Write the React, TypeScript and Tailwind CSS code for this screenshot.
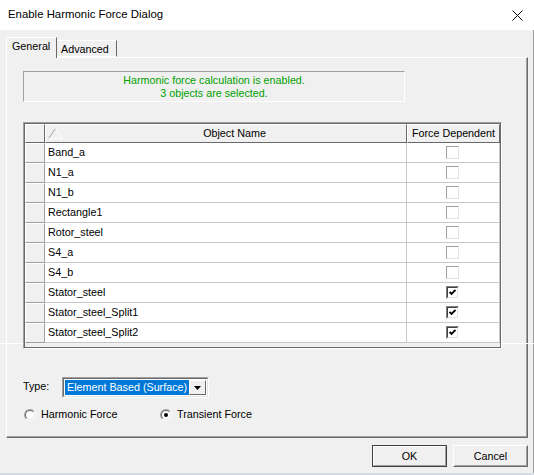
import React from 'react';

const rows = [
  { name: 'Band_a', checked: false },
  { name: 'N1_a', checked: false },
  { name: 'N1_b', checked: false },
  { name: 'Rectangle1', checked: false },
  { name: 'Rotor_steel', checked: false },
  { name: 'S4_a', checked: false },
  { name: 'S4_b', checked: false },
  { name: 'Stator_steel', checked: true },
  { name: 'Stator_steel_Split1', checked: true },
  { name: 'Stator_steel_Split2', checked: true },
];

const CheckBox: React.FC<{ checked: boolean }> = ({ checked }) => {
  if (!checked) {
    return (
      <div className="w-[13px] h-[13px] bg-white border border-t-[#a0a0a0] border-l-[#a0a0a0] border-b-[#e3e3e3] border-r-[#e3e3e3]" />
    );
  }
  return (
    <div className="w-[13px] h-[13px] border border-t-[#808080] border-l-[#808080] border-b-white border-r-white">
      <div className="w-full h-full bg-white border border-t-[#404040] border-l-[#404040] border-b-[#e3e3e3] border-r-[#e3e3e3] flex items-center justify-center">
        <svg width="7" height="7" viewBox="0 0 7 7">
          <path d="M0.5 3 L2.5 5 L6.5 1" fill="none" stroke="#000" strokeWidth="1.8" />
        </svg>
      </div>
    </div>
  );
};

const Radio: React.FC<{ checked: boolean }> = ({ checked }) => (
  <div className="w-[12px] h-[12px] rounded-full border border-t-[#a0a0a0] border-l-[#a0a0a0] border-b-white border-r-white">
    <div className="w-full h-full rounded-full bg-white border border-t-[#696969] border-l-[#696969] border-b-[#e3e3e3] border-r-[#e3e3e3] flex items-center justify-center">
      {checked && <div className="w-[4px] h-[4px] rounded-full bg-black" />}
    </div>
  </div>
);

export default function App() {
  return (
    <div className="relative w-[534px] h-[475px] flex flex-col overflow-hidden font-['Liberation_Sans',Arial,sans-serif] text-[10.75px] text-black">
      {/* title bar */}
      <div className="h-[30px] bg-white flex items-center justify-between pl-[8px] pr-[11px]">
        <span className="text-[11.4px] leading-none">Enable Harmonic Force Dialog</span>
        <svg width="11" height="11" viewBox="0 0 11 11">
          <path d="M0.5 0.5 L10.5 10.5 M10.5 0.5 L0.5 10.5" stroke="#000" strokeWidth="1" />
        </svg>
      </div>

      {/* body */}
      <div className="flex-1 bg-[#f0f0f0] border-r border-[#9a9a9a] flex flex-col pl-[6px] pr-[5px] pt-[7px]">
        {/* tabs */}
        <div className="h-[20px] flex items-end">
          <div className="relative z-10 h-[21px] mb-[-1px] w-[51px] bg-[#f0f0f0] border-t border-l border-t-white border-l-white border-r border-r-[#696969] pl-[5px] pt-[2px] leading-[13px]">
            General
          </div>
          <div className="h-[17px] w-[60px] border-t border-t-white border-r border-r-[#696969] border-b border-b-white pl-[4px] pt-[2px] leading-[13px]">
            Advanced
          </div>
        </div>

        {/* panel */}
        <div className="h-[381px] border-t border-l border-white border-r border-b border-r-[#696969] border-b-[#696969]">
          <div className="h-full border-r border-b border-[#a0a0a0] pl-[16px] pt-[13px] flex flex-col">
            {/* info box */}
            <div className="w-[382px] h-[31px] border border-t-[#a0a0a0] border-l-[#a0a0a0] border-b-white border-r-white text-center text-[#00a000] leading-[13px] pt-[2px]">
              <div>Harmonic force calculation is enabled.</div>
              <div>3 objects are selected.</div>
            </div>

            {/* grid */}
            <div className="mt-[20px] w-[479px] h-[227px] border border-t-[#a0a0a0] border-l-[#a0a0a0] border-b-white border-r-white">
              <div className="w-full h-full border border-[#696969] bg-[#f0f0f0]">
                <div className="flex h-[19px]">
                  <div className="w-[20px] border-t border-l border-white border-b border-r border-b-[#696969] border-r-[#696969]" />
                  <div className="w-[362px] flex items-center pl-[2px] border-t border-l border-white border-b border-r border-b-[#696969] border-r-[#696969]">
                    <svg width="15" height="11" viewBox="0 0 15 11">
                      <path d="M0.5 10.5 L7.5 0.5" stroke="#a0a0a0" strokeWidth="1" fill="none" />
                      <path d="M7.5 0.5 L14.5 10.5 L0.5 10.5" stroke="#ffffff" strokeWidth="1" fill="none" />
                    </svg>
                    <span className="flex-1 text-center">Object Name</span>
                  </div>
                  <div className="w-[93px] flex items-center justify-center border-t border-l border-white border-b border-r border-b-[#696969] border-r-[#696969]">
                    Force Dependent
                  </div>
                </div>
                {rows.map((r) => (
                  <div key={r.name} className="flex h-[20px]">
                    <div className="w-[20px] border-t border-l border-white border-b border-r border-b-[#a0a0a0] border-r-[#a0a0a0]" />
                    <div className="w-[362px] bg-white border-b border-r border-[#c8c8c8] flex items-center pl-[3px]">
                      {r.name}
                    </div>
                    <div className="w-[93px] bg-white border-b border-r border-[#c8c8c8] flex items-center justify-center pr-[1px]">
                      <CheckBox checked={r.checked} />
                    </div>
                  </div>
                ))}
              </div>
            </div>

            {/* type */}
            <div className="mt-[28px] h-[21px] flex items-center">
              <span className="w-[39px] mt-[-3px]">Type:</span>
              <div className="w-[147px] h-[21px] border border-t-[#a0a0a0] border-l-[#a0a0a0] border-b-white border-r-white">
                <div className="w-full h-full bg-white border border-t-[#696969] border-l-[#696969] border-b-[#e3e3e3] border-r-[#e3e3e3] flex p-[1px]">
                  <div className="flex-1 bg-[#0078d7] text-white flex items-center pl-[2px] leading-none">
                    Element Based (Surface)
                  </div>
                  <div className="w-[17px] bg-[#f0f0f0] border border-t-white border-l-white border-b-[#696969] border-r-[#696969] flex items-center justify-center">
                    <svg width="7" height="4" viewBox="0 0 7 4">
                      <polygon points="0,0 7,0 3.5,4" fill="#000" />
                    </svg>
                  </div>
                </div>
              </div>
            </div>

            {/* radios */}
            <div className="mt-[10px] h-[13px] flex items-center">
              <div className="ml-[1px] w-[136px] flex items-center gap-[5px]">
                <Radio checked={false} />
                <span>Harmonic Force</span>
              </div>
              <div className="flex items-center gap-[5px]">
                <Radio checked={true} />
                <span>Transient Force</span>
              </div>
            </div>
          </div>
        </div>

        {/* buttons */}
        <div className="mt-[7px] h-[22px] flex justify-end gap-[6px]">
          <div className="w-[75px] h-[22px] border border-[#404040]">
            <div className="w-full h-full bg-[#f0f0f0] border border-t-white border-l-white border-b-[#a0a0a0] border-r-[#a0a0a0] flex items-center justify-center">
              OK
            </div>
          </div>
          <div className="w-[75px] h-[22px] border border-t-white border-l-white border-b-[#696969] border-r-[#696969]">
            <div className="w-full h-full bg-[#f0f0f0] border border-t-[#f0f0f0] border-l-[#f0f0f0] border-b-[#a0a0a0] border-r-[#a0a0a0] flex items-center justify-center">
              Cancel
            </div>
          </div>
        </div>
      </div>

      {/* bottom strip */}
      <div className="h-[2px] bg-[#d3d9e6]" />

      {/* stray white lines over the window */}
      <div className="absolute top-[343px] left-0 w-[23px] h-[1px] bg-white" />
      <div className="absolute top-[343px] left-[502px] right-0 h-[1px] bg-white" />
    </div>
  );
}
